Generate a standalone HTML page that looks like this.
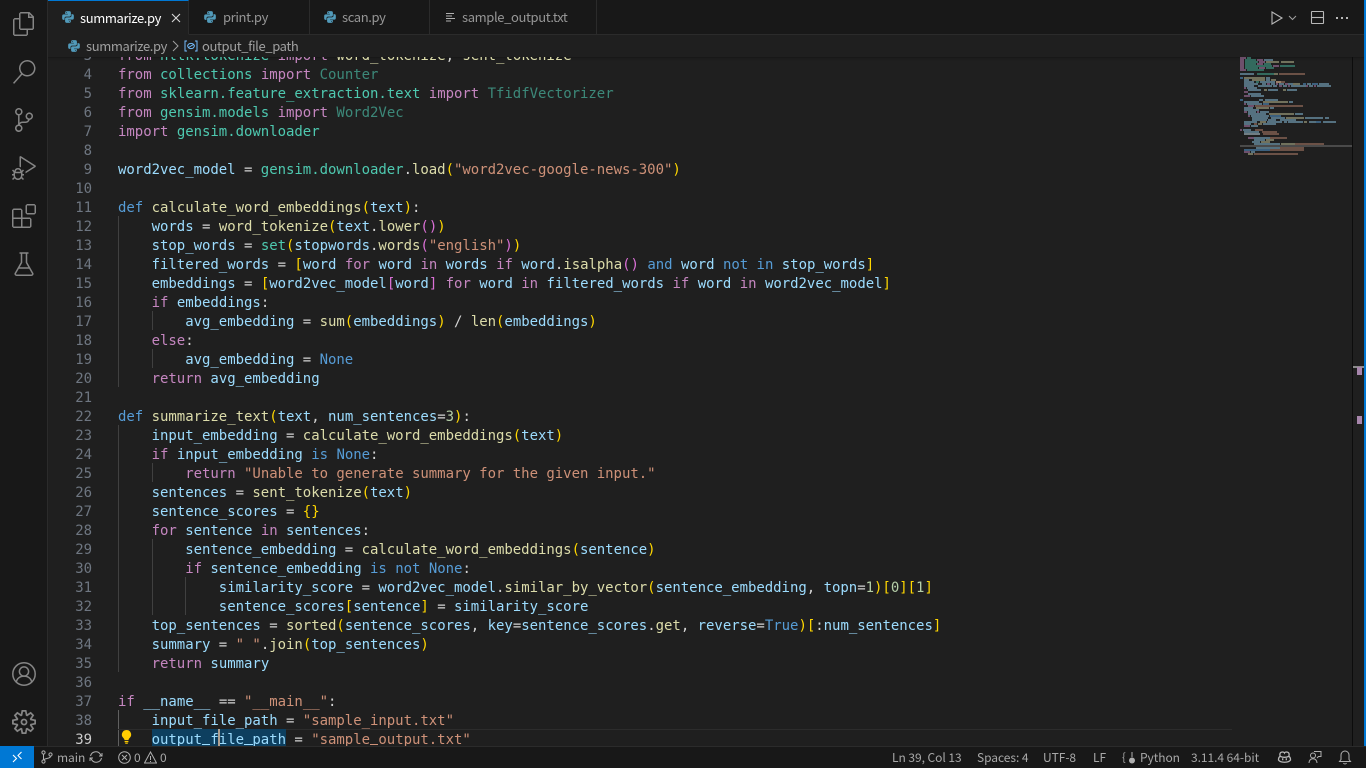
<!DOCTYPE html>
<html><head><meta charset="utf-8"><title>summarize.py</title>
<style>
html,body{margin:0;padding:0;width:1366px;height:768px;overflow:hidden;background:#1f1f1f}
*{box-sizing:border-box}
.abs,svg.i{position:absolute}
.ui{font-family:"Noto Sans CJK JP","Liberation Sans",sans-serif;font-size:13px;white-space:pre;letter-spacing:-.38px}
#act{position:absolute;left:0;top:0;width:48px;height:746px;background:#181818;border-right:1px solid #2b2b2b}
#tabs{position:absolute;left:48px;top:0;width:1318px;height:35px;background:#181818;border-bottom:1px solid #2b2b2b}
.tab{position:absolute;top:0;height:35px;background:#181818;border-right:1px solid #2b2b2b;border-bottom:1px solid #2b2b2b;color:#969696;line-height:34px}
.tab.on{background:#1f1f1f;border-top:1px solid #0078d4;border-bottom:1px solid #1f1f1f;color:#fff;line-height:33px}
.tab span{position:absolute;top:0}
#crumb{position:absolute;left:48px;top:35px;width:1318px;height:22px;background:#1f1f1f;color:#a0a0a0;line-height:22px}
#ed{position:absolute;left:48px;top:57px;width:1316px;height:689px;background:#1f1f1f;overflow:hidden;box-shadow:inset 0 3px 3px -3px #111}
.ln{position:absolute;left:0;width:44px;margin-top:1px;text-align:right;color:#6e7681;font:14px/19px "DejaVu Sans Mono",monospace;letter-spacing:-.03px}
.c{position:absolute;left:70px;margin-top:1px;white-space:pre;color:#d4d4d4;font:14px/19px "DejaVu Sans Mono",monospace;letter-spacing:-.03px}
.g{position:absolute;width:1px;background:#404040}
.k{color:#c586c0}.t{color:#4ec9b0}.v{color:#9cdcfe}.f{color:#dcdcaa}.s{color:#ce9178}.b{color:#569cd6}.n{color:#b5cea8}.y{color:#ffd700}.o{color:#da70d6}
.d{opacity:.62}
#st{position:absolute;left:0;top:746px;width:1366px;height:22px;background:#181818;border-top:1px solid #2b2b2b;color:#a8a8a8;line-height:21px;font-size:12px;letter-spacing:-.05px}
#st span{position:absolute;top:0}
</style></head><body>

<div id="act">
<svg class="i" style="left:12px;top:12px" width="24" height="24" viewBox="0 0 24 24" fill="#858585"><path fill-rule="evenodd" d="M17.5 0h-9L7 1.5V6H2.5L1 7.5v15.07L2.5 24h12.07L16 22.57V18h4.7l1.3-1.43V4.5L17.5 0zm0 2.12l2.38 2.38H17.5V2.12zm-3 20.38h-12v-15H7v9.07L8.5 18h6v4.5zm6-6h-12v-15H16V6h4.5v10.5z"/></svg>
<svg class="i" style="left:12px;top:60px" width="24" height="24" viewBox="0 0 24 24" fill="#858585"><path fill-rule="evenodd" d="M15.25 0a8.25 8.25 0 0 0-6.18 13.72L1 22.88l1.12 1 8.05-9.12A8.251 8.251 0 1 0 15.25.01V0zm0 15a6.75 6.75 0 1 1 0-13.5 6.75 6.75 0 0 1 0 13.5z"/></svg>
<svg class="i" style="left:12px;top:108px" width="24" height="24" viewBox="0 0 24 24" fill="#858585"><path fill-rule="evenodd" d="M21.007 8.222A3.738 3.738 0 0 0 15.045 5.2a3.737 3.737 0 0 0 1.156 6.583 2.988 2.988 0 0 1-2.668 1.67h-2.99a4.456 4.456 0 0 0-2.989 1.165V7.4a3.737 3.737 0 1 0-1.494 0v9.117a3.776 3.776 0 1 0 1.816.099 2.99 2.99 0 0 1 2.668-1.667h2.99a4.484 4.484 0 0 0 4.223-3.039 3.736 3.736 0 0 0 3.25-3.687zM4.565 3.738a2.242 2.242 0 1 1 4.484 0 2.242 2.242 0 0 1-4.484 0zm4.484 16.441a2.242 2.242 0 1 1-4.484 0 2.242 2.242 0 0 1 4.484 0zm8.221-9.715a2.242 2.242 0 1 1 0-4.485 2.242 2.242 0 0 1 0 4.485z"/></svg>
<svg class="i" style="left:12px;top:156px" width="24" height="24" viewBox="0 0 24 24" fill="#858585"><path fill-rule="evenodd" d="M10.94 13.5l-1.32 1.32a3.73 3.73 0 0 0-7.24 0L1.06 13.5 0 14.56l1.72 1.72-.22.22V18H0v1.5h1.5v.08c.077.489.214.966.41 1.42L0 22.94 1.06 24l1.65-1.65A4.308 4.308 0 0 0 6 24a4.31 4.31 0 0 0 3.29-1.65L10.94 24 12 22.94 10.09 21c.198-.464.336-.951.41-1.45v-.05H12V18h-1.5v-1.5l-.22-.22L12 14.56l-1.06-1.06zM6 13.5a2.25 2.25 0 0 1 2.25 2.25h-4.5A2.25 2.25 0 0 1 6 13.5zm3 6a3.33 3.33 0 0 1-3 3 3.33 3.33 0 0 1-3-3v-2.25h6v2.25zm14.76-9.9v1.26L13.5 17.37v-1.79l8.45-5.37L9 2v9.46a5.07 5.07 0 0 0-1.5-.72V.63L8.64 0l15.12 9.6z"/></svg>
<svg class="i" style="left:12px;top:204px" width="24" height="24" viewBox="0 0 24 24" fill="#858585"><path fill-rule="evenodd" d="M13.5 1.5L15 0h7.5L24 1.5V9l-1.5 1.5H15L13.5 9V1.5zm1.5 0V9h7.5V1.5H15zM0 15V6l1.5-1.5H9L10.5 6v7.5H18l1.5 1.5v7.5L18 24H1.5L0 22.5V15zm9-1.5V6H1.5v7.5H9zM9 15H1.5v7.5H9V15zm1.5 7.5H18V15h-7.5v7.5z"/></svg>
<svg class="i" style="left:12px;top:252px" width="24" height="24" viewBox="0 0 24 24" fill="none" stroke="#858585" stroke-width="1.5"><path d="M7.5 1h9M9.5 1v9.5L3.4 21.2a1.3 1.3 0 0 0 1.1 2h15a1.3 1.3 0 0 0 1.1-2L14.5 10.5V1M6.5 16h11"/></svg>
<svg class="i" style="left:12px;top:662px" width="24" height="24" viewBox="0 0 24 24" fill="none" stroke="#858585" stroke-width="1.5"><circle cx="12" cy="12" r="11.2"/><circle cx="12" cy="9.5" r="4.6"/><path d="M4.3 20.2c.5-3.6 3.6-6.1 7.7-6.1s7.2 2.5 7.7 6.1"/></svg>
<svg class="i" style="left:12px;top:710px" width="24" height="24" viewBox="0 0 24 24" fill="#858585"><path fill-rule="evenodd" d="M19.85 8.75l4.15.83v4.84l-4.15.83 2.35 3.52-3.43 3.43-3.52-2.35-.83 4.15H9.58l-.83-4.15-3.52 2.35-3.43-3.43 2.35-3.52L0 14.42V9.58l4.15-.83L1.8 5.23 5.23 1.8l3.52 2.35L9.58 0h4.84l.83 4.15 3.52-2.35 3.43 3.43-2.35 3.52zm-1.57 5.07l4-.81v-2l-4-.81-.54-1.3 2.29-3.43-1.43-1.43-3.43 2.29-1.3-.54-.81-4h-2l-.81 4-1.3.54-3.43-2.29-1.43 1.43L6.38 8.9l-.54 1.3-4 .81v2l4 .81.54 1.3-2.29 3.43 1.43 1.43 3.43-2.29 1.3.54.81 4h2l.81-4 1.3-.54 3.43 2.29 1.43-1.43-2.29-3.43.54-1.3zm-8.186-4.672A3.43 3.43 0 0 1 12 8.57 3.44 3.44 0 0 1 15.43 12a3.43 3.43 0 1 1-5.336-2.852zm.956 4.274c.281.188.612.288.95.288A1.7 1.7 0 0 0 13.71 12a1.71 1.71 0 1 0-2.66 1.422z"/></svg>
</div>

<svg width="0" height="0" style="position:absolute"><defs>
<symbol id="py" viewBox="0 0 24 24"><path fill="#519aba" d="M9.86 2A2.86 2.86 0 0 0 7 4.86v1.68h4.29c.39 0 .71.57.71.96H4.86A2.86 2.86 0 0 0 2 10.36v3.781a2.86 2.86 0 0 0 2.86 2.86h1.18v-2.68a2.85 2.85 0 0 1 2.85-2.86h5.25c1.58 0 2.86-1.271 2.86-2.851V4.86A2.86 2.86 0 0 0 14.14 2zm-.72 1.61c.4 0 .72.12.72.71s-.32.891-.72.891c-.39 0-.71-.3-.71-.89s.32-.711.71-.711z"/><path fill="#519aba" d="M17.959 7v2.68a2.85 2.85 0 0 1-2.85 2.859H9.86A2.85 2.85 0 0 0 7 15.389v3.75a2.86 2.86 0 0 0 2.86 2.86h4.28A2.86 2.86 0 0 0 17 19.14v-1.68h-4.291c-.39 0-.709-.57-.709-.96h7.14A2.86 2.86 0 0 0 22 13.64V9.86A2.86 2.86 0 0 0 19.14 7zm-3.1 11.789c.39 0 .71.3.71.89a.71.71 0 0 1-.71.71c-.4 0-.72-.12-.72-.71s.32-.89.72-.89z"/></symbol>
</defs></svg>

<div id="tabs" class="ui">
<div class="tab on" style="left:0;width:141px"><svg class="i" style="left:13px;top:9px" width="14" height="14"><use href="#py"/></svg><span style="left:32px">summarize.py</span>
<svg class="i" style="left:123px;top:12px" width="10" height="10" viewBox="0 0 10 10" stroke="#d8d8d8" stroke-width="1.1"><path d="M1 1l8 8M9 1l-8 8"/></svg></div>
<div class="tab" style="left:141px;width:121px"><svg class="i" style="left:14px;top:10px" width="14" height="14"><use href="#py"/></svg><span style="left:34px">print.py</span></div>
<div class="tab" style="left:262px;width:120px"><svg class="i" style="left:13px;top:10px" width="14" height="14"><use href="#py"/></svg><span style="left:32px">scan.py</span></div>
<div class="tab" style="left:382px;width:167px"><svg class="i" style="left:16px;top:12px" width="10" height="10" viewBox="0 0 10 10" stroke="#b0b0b0" stroke-width="1"><path d="M0 1.5h8M0 4h6M0 6.5h9M0 9h5"/></svg><span style="left:32px">sample_output.txt</span></div>
<svg class="i" style="left:1222px;top:10px" width="14" height="16" viewBox="0 0 14 16" fill="none" stroke="#b8b8b8" stroke-width="1.1"><path d="M2 2v12l10-6z"/></svg>
<svg class="i" style="left:1240px;top:15px" width="9" height="6" viewBox="0 0 9 6" fill="none" stroke="#a0a0a0" stroke-width="1"><path d="M1 1l3.5 3.5L8 1"/></svg>
<svg class="i" style="left:1262px;top:10px" width="15" height="15" viewBox="0 0 15 15" fill="none" stroke="#b8b8b8" stroke-width="1.1"><rect x="1.5" y="1.5" width="12" height="12" rx=".5"/><path d="M1.5 7.5h12"/></svg>
<svg class="i" style="left:1287px;top:16px" width="14" height="4" viewBox="0 0 14 4" fill="#b8b8b8"><rect x="1" y="1" width="2" height="2"/><rect x="6" y="1" width="2" height="2"/><rect x="11" y="1" width="2" height="2"/></svg>
</div>

<div id="crumb" class="ui">
<svg class="i" style="left:19px;top:4px" width="14" height="14"><use href="#py"/></svg>
<span class="abs" style="left:38px;top:0">summarize.py</span>
<svg class="i" style="left:124px;top:5px" width="7" height="12" viewBox="0 0 7 12" fill="none" stroke="#a0a0a0" stroke-width="1"><path d="M1 1l5 5-5 5"/></svg>
<svg class="i" style="left:136px;top:5px" width="14" height="12" viewBox="0 0 14 12" fill="none" stroke="#75beff" stroke-width="1"><path d="M3 1H1v10h2M11 1h2v10h-2"/><ellipse cx="7" cy="6" rx="3.3" ry="2.6"/><path d="M4.5 7.5l5-3"/></svg>
<span class="abs" style="left:154px;top:0">output_file_path</span>
</div>

<div id="ed">
<!-- indent guides -->
<div class="g" style="left:70px;top:159px;height:171px"></div>
<div class="g" style="left:70px;top:368px;height:247px"></div>
<div class="g" style="left:70px;top:653px;height:36px;background:#606060"></div>
<div class="g" style="left:104px;top:254px;height:19px"></div>
<div class="g" style="left:104px;top:292px;height:19px"></div>
<div class="g" style="left:104px;top:406px;height:19px"></div>
<div class="g" style="left:104px;top:482px;height:76px"></div>
<div class="g" style="left:137px;top:520px;height:38px"></div>
<!-- current line -->
<div class="abs" style="left:70px;top:672px;width:1114px;height:1px;background:#2c2c2c"></div>
<div class="abs" style="left:104px;top:672px;width:134px;height:17px;background:#0d3f5f"></div>

<div class="c" style="top:-11px"><span class="k">from</span> <span class="t">nltk.tokenize</span> <span class="k">import</span> <span class="f">word_tokenize</span>, <span class="f">sent_tokenize</span></div>
<div class="ln" style="top:-11px">3</div>
<div class="ln" style="top:8px">4</div><div class="c" style="top:8px"><span class="k">from</span> <span class="t">collections</span> <span class="k">import</span> <span class="t d">Counter</span></div>
<div class="ln" style="top:27px">5</div><div class="c" style="top:27px"><span class="k">from</span> <span class="t">sklearn.feature_extraction.text</span> <span class="k">import</span> <span class="t d">TfidfVectorizer</span></div>
<div class="ln" style="top:46px">6</div><div class="c" style="top:46px"><span class="k">from</span> <span class="t">gensim.models</span> <span class="k">import</span> <span class="t d">Word2Vec</span></div>
<div class="ln" style="top:65px">7</div><div class="c" style="top:65px"><span class="k">import</span> <span class="t">gensim.downloader</span></div>
<div class="ln" style="top:84px">8</div>
<div class="ln" style="top:103px">9</div><div class="c" style="top:103px"><span class="v">word2vec_model</span> = <span class="t">gensim.downloader</span>.<span class="f">load</span><span class="y">(</span><span class="s">"word2vec-google-news-300"</span><span class="y">)</span></div>
<div class="ln" style="top:122px">10</div>
<div class="ln" style="top:141px">11</div><div class="c" style="top:141px"><span class="b">def</span> <span class="f">calculate_word_embeddings</span><span class="y">(</span><span class="v">text</span><span class="y">)</span>:</div>
<div class="ln" style="top:160px">12</div><div class="c" style="top:160px">    <span class="v">words</span> = <span class="f">word_tokenize</span><span class="y">(</span><span class="v">text</span>.<span class="f">lower</span><span class="o">()</span><span class="y">)</span></div>
<div class="ln" style="top:179px">13</div><div class="c" style="top:179px">    <span class="v">stop_words</span> = <span class="t">set</span><span class="y">(</span><span class="v">stopwords</span>.<span class="f">words</span><span class="o">(</span><span class="s">"english"</span><span class="o">)</span><span class="y">)</span></div>
<div class="ln" style="top:198px">14</div><div class="c" style="top:198px">    <span class="v">filtered_words</span> = <span class="y">[</span><span class="v">word</span> <span class="k">for</span> <span class="v">word</span> <span class="k">in</span> <span class="v">words</span> <span class="k">if</span> <span class="v">word</span>.<span class="f">isalpha</span><span class="o">()</span> <span class="b">and</span> <span class="v">word</span> <span class="b">not in</span> <span class="v">stop_words</span><span class="y">]</span></div>
<div class="ln" style="top:217px">15</div><div class="c" style="top:217px">    <span class="v">embeddings</span> = <span class="y">[</span><span class="v">word2vec_model</span><span class="o">[</span><span class="v">word</span><span class="o">]</span> <span class="k">for</span> <span class="v">word</span> <span class="k">in</span> <span class="v">filtered_words</span> <span class="k">if</span> <span class="v">word</span> <span class="k">in</span> <span class="v">word2vec_model</span><span class="y">]</span></div>
<div class="ln" style="top:236px">16</div><div class="c" style="top:236px">    <span class="k">if</span> <span class="v">embeddings</span>:</div>
<div class="ln" style="top:255px">17</div><div class="c" style="top:255px">        <span class="v">avg_embedding</span> = <span class="f">sum</span><span class="y">(</span><span class="v">embeddings</span><span class="y">)</span> / <span class="f">len</span><span class="y">(</span><span class="v">embeddings</span><span class="y">)</span></div>
<div class="ln" style="top:274px">18</div><div class="c" style="top:274px">    <span class="k">else</span>:</div>
<div class="ln" style="top:293px">19</div><div class="c" style="top:293px">        <span class="v">avg_embedding</span> = <span class="b">None</span></div>
<div class="ln" style="top:312px">20</div><div class="c" style="top:312px">    <span class="k">return</span> <span class="v">avg_embedding</span></div>
<div class="ln" style="top:331px">21</div>
<div class="ln" style="top:350px">22</div><div class="c" style="top:350px"><span class="b">def</span> <span class="f">summarize_text</span><span class="y">(</span><span class="v">text</span>, <span class="v">num_sentences</span>=<span class="n">3</span><span class="y">)</span>:</div>
<div class="ln" style="top:369px">23</div><div class="c" style="top:369px">    <span class="v">input_embedding</span> = <span class="f">calculate_word_embeddings</span><span class="y">(</span><span class="v">text</span><span class="y">)</span></div>
<div class="ln" style="top:388px">24</div><div class="c" style="top:388px">    <span class="k">if</span> <span class="v">input_embedding</span> <span class="b">is</span> <span class="b">None</span>:</div>
<div class="ln" style="top:407px">25</div><div class="c" style="top:407px">        <span class="k">return</span> <span class="s">"Unable to generate summary for the given input."</span></div>
<div class="ln" style="top:426px">26</div><div class="c" style="top:426px">    <span class="v">sentences</span> = <span class="f">sent_tokenize</span><span class="y">(</span><span class="v">text</span><span class="y">)</span></div>
<div class="ln" style="top:445px">27</div><div class="c" style="top:445px">    <span class="v">sentence_scores</span> = <span class="y">{}</span></div>
<div class="ln" style="top:464px">28</div><div class="c" style="top:464px">    <span class="k">for</span> <span class="v">sentence</span> <span class="k">in</span> <span class="v">sentences</span>:</div>
<div class="ln" style="top:483px">29</div><div class="c" style="top:483px">        <span class="v">sentence_embedding</span> = <span class="f">calculate_word_embeddings</span><span class="y">(</span><span class="v">sentence</span><span class="y">)</span></div>
<div class="ln" style="top:502px">30</div><div class="c" style="top:502px">        <span class="k">if</span> <span class="v">sentence_embedding</span> <span class="b">is not</span> <span class="b">None</span>:</div>
<div class="ln" style="top:521px">31</div><div class="c" style="top:521px">            <span class="v">similarity_score</span> = <span class="v">word2vec_model</span>.<span class="f">similar_by_vector</span><span class="y">(</span><span class="v">sentence_embedding</span>, <span class="v">topn</span>=<span class="n">1</span><span class="y">)[</span><span class="n">0</span><span class="y">][</span><span class="n">1</span><span class="y">]</span></div>
<div class="ln" style="top:540px">32</div><div class="c" style="top:540px">            <span class="v">sentence_scores</span><span class="y">[</span><span class="v">sentence</span><span class="y">]</span> = <span class="v">similarity_score</span></div>
<div class="ln" style="top:559px">33</div><div class="c" style="top:559px">    <span class="v">top_sentences</span> = <span class="f">sorted</span><span class="y">(</span><span class="v">sentence_scores</span>, <span class="v">key</span>=<span class="v">sentence_scores</span>.<span class="f">get</span>, <span class="v">reverse</span>=<span class="b">True</span><span class="y">)[</span>:<span class="v">num_sentences</span><span class="y">]</span></div>
<div class="ln" style="top:578px">34</div><div class="c" style="top:578px">    <span class="v">summary</span> = <span class="s">" "</span>.<span class="f">join</span><span class="y">(</span><span class="v">top_sentences</span><span class="y">)</span></div>
<div class="ln" style="top:597px">35</div><div class="c" style="top:597px">    <span class="k">return</span> <span class="v">summary</span></div>
<div class="ln" style="top:616px">36</div>
<div class="ln" style="top:635px">37</div><div class="c" style="top:635px"><span class="k">if</span> <span class="v">__name__</span> == <span class="s">"__main__"</span>:</div>
<div class="ln" style="top:654px">38</div><div class="c" style="top:654px">    <span class="v">input_file_path</span> = <span class="s">"sample_input.txt"</span></div>
<div class="ln" style="top:673px;color:#cccccc">39</div><div class="c" style="top:673px">    <span class="v">output_file_path</span> = <span class="s">"sample_output.txt"</span></div>

<!-- underscores that would otherwise clip against the status bar -->
<div class="abs" style="left:154px;top:687px;width:8px;height:1px;background:#9cdcfe"></div>
<div class="abs" style="left:196px;top:687px;width:9px;height:1px;background:#9cdcfe"></div>
<div class="abs" style="left:322px;top:687px;width:8px;height:1px;background:#ce9178"></div>

<div class="abs" style="left:170px;top:672px;width:2px;height:17px;background:#b0a090"></div>
<svg class="i" style="left:72px;top:672px" width="13" height="16" viewBox="0 0 13 16" fill="#ffcc00"><path d="M6.5 1a4.6 4.6 0 0 0-3 8.1c.6.6.9 1.1 1 2h4c.1-.9.4-1.4 1-2A4.6 4.6 0 0 0 6.500 1zM4.600 12h3.800v1.200H4.600zM5.200 13.800h2.600v1H5.200z"/></svg>

<!-- minimap -->
<svg class="i" style="left:1192px;top:0" width="112" height="110" viewBox="0 0 112 110" fill="none" stroke-width="1.8">
<g stroke="#c586c0" opacity=".55"><path d="M0 1h6M0 3h4M17 3h6M0 5h4M19 5h6M0 7h4M17 7h6M0 9h4M33 9h6M0 11h4M19 11h6M0 13h6M27 27h3M36 27h2M45 27h3M39 29h3M48 29h2M66 29h2M74 29h2M4 31h2M4 35h4M4 39h6M4 47h2M8 49h6M4 55h3M17 55h2M8 59h2M4 69h6M0 73h2M8 81h6M4 95h6"/></g>
<g stroke="#4ec9b0" opacity=".5"><path d="M7 1h4M5 3h11M5 5h13M5 7h11M24 7h7M5 9h27M40 9h15M5 11h13M26 11h8M7 13h17M17 17h17M16 25h3"/></g>
<g stroke="#9cdcfe" opacity=".5"><path d="M24 3h9M0 17h14M26 21h4M4 23h5M26 23h4M4 25h10M20 25h15M4 27h14M22 27h4M31 27h4M39 27h5M48 27h5M67 27h4M79 27h10M4 29h10M18 29h14M33 29h4M43 29h4M51 29h15M69 29h4M77 29h14M7 31h10M8 33h13M28 33h10M47 33h10M8 37h13M11 39h13M19 43h4M25 43h13M4 45h15M49 45h4M7 47h15M4 51h9M30 51h4M4 53h15M8 55h8M20 55h9M8 57h18M55 57h8M11 59h18M12 61h16M31 61h14M65 61h18M85 61h4M12 63h15M28 63h8M40 63h16M4 65h13M27 65h15M44 65h3M48 65h15M69 65h7M83 65h13M4 67h7M23 67h13M11 69h7M3 73h8M4 75h15M4 77h16M14 81h16M14 83h11M12 85h8M14 87h26M16 91h24M11 95h4"/></g>
<g stroke="#dcdcaa" opacity=".5"><path d="M26 5h13M41 5h13M34 17h4M4 21h21M12 23h13M31 23h5M36 25h5M53 27h7M24 33h3M43 33h3M23 45h25M16 51h13M29 57h25M46 61h18M20 65h6M64 65h3M18 67h4M26 83h8M21 85h9M41 87h14M8 97h5"/></g>
<g stroke="#ce9178" opacity=".5"><path d="M39 17h26M36 25h9M15 49h48M14 67h3M15 73h8M22 75h15M23 77h16M30 81h17M55 87h29M40 91h24M30 93h34M14 97h44"/></g>
<g stroke="#569cd6" opacity=".6"><path d="M0 21h3M0 43h3M63 27h3M72 27h6M23 47h6M30 59h11M76 65h5M4 93h26"/></g>
<path d="M4 77h16" stroke="#8a8a8a" opacity=".6"/>
</svg>
<div class="abs" style="left:1192px;top:88px;width:112px;height:2px;background:#4a4a4a"></div>

<!-- overview ruler -->
<div class="abs" style="left:1304px;top:0;width:1px;height:689px;background:#0c0c0c"></div>
<div class="abs" style="left:1305px;top:309px;width:11px;height:2px;background:#8a8a8a"></div>
<div class="abs" style="left:1309px;top:310px;width:5px;height:8px;background:#a685ab"></div>
<div class="abs" style="left:1309px;top:359px;width:5px;height:8px;background:#a685ab"></div>
</div>

<div class="abs" style="left:1364px;top:0;width:2px;height:746px;background:#0078d4"></div>

<div id="st" class="ui">
<div class="abs" style="left:0;top:-1px;width:34px;height:22px;background:#0078d4"></div>
<svg class="i" style="left:11px;top:3px" width="13" height="14" viewBox="0 0 13 14" fill="none" stroke="#fff" stroke-width="1.1"><path d="M2 5l3.500 3.500L2 12M10.500 2L7 5.500 10.500 9"/></svg>
<svg class="i" style="left:41px;top:3px" width="12" height="14" viewBox="0 0 12 14" fill="none" stroke="#b0b0b0" stroke-width="1"><circle cx="2.500" cy="2.500" r="1.600"/><circle cx="2.500" cy="11.500" r="1.600"/><circle cx="9.500" cy="4.500" r="1.600"/><path d="M2.500 4v6M9.500 6.200c0 2.600-5 1.600-7 3.800"/></svg>
<span style="left:57px">main</span>
<svg class="i" style="left:89px;top:3px" width="14" height="14" viewBox="0 0 14 14" fill="none" stroke="#b0b0b0" stroke-width="1"><path d="M1.500 6a5.400 5.400 0 0 1 9.800-1.800L12.500 6M12.500 8a5.400 5.400 0 0 1-9.800 1.800L1.500 8M13 3v3h-3M1 11V8h3"/></svg>
<svg class="i" style="left:118px;top:4px" width="13" height="13" viewBox="0 0 13 13" fill="none" stroke="#b0b0b0" stroke-width="1"><circle cx="6.500" cy="6.500" r="5.800"/><path d="M4 4l5 5M9 4l-5 5"/></svg>
<span style="left:134px">0</span>
<svg class="i" style="left:144px;top:4px" width="13" height="13" viewBox="0 0 13 13" fill="none" stroke="#b0b0b0" stroke-width="1"><path d="M6.500 1L12.500 12H.5zM6.500 5v4M6.500 10v1"/></svg>
<span style="left:160px">0</span>
<span style="left:892px">Ln 39, Col 13</span>
<span style="left:977px">Spaces: 4</span>
<span style="left:1043px">UTF-8</span>
<span style="left:1093px">LF</span>
<span style="left:1122px;letter-spacing:3px;font-size:11px">{</span>
<svg class="i" style="left:1128px;top:4px" width="8" height="13" viewBox="0 0 8 13" fill="#b0b0b0"><circle cx="4" cy="9.500" r="3"/><path d="M3.500 1h1v5h-1z"/></svg>
<span style="left:1140px">Python</span>
<span style="left:1191px">3.11.4 64-bit</span>
<svg class="i" style="left:1277px;top:4px" width="15" height="13" viewBox="0 0 15 13" fill="none" stroke="#b8b8b8" stroke-width="1.300"><path d="M3.200 5.200C2.200 2.500 3.500 1 5.500 1c1 0 1.700.4 2 1 .3-.6 1-1 2-1 2 0 3.300 1.500 2.300 4.200 1.400 1 1.800 2.300 1.700 3.800-2 3-10 3-12 0-.1-1.500.3-2.800 1.700-3.800zM3.500 5.500c2.500 1 5.500 1 8 0"/><path d="M5.700 7.300v2M9.300 7.300v2"/></svg>
<svg class="i" style="left:1308px;top:3px" width="14" height="14" viewBox="0 0 14 14" fill="none" stroke="#b0b0b0" stroke-width="1"><circle cx="5" cy="5.500" r="2.500"/><path d="M1 13c.2-2.800 1.800-4.300 4-4.300s3.800 1.500 4 4.300M6 1.500h7v5H10.500L9 8"/></svg>
<svg class="i" style="left:1338px;top:3px" width="14" height="15" viewBox="0 0 14 15" fill="none" stroke="#b0b0b0" stroke-width="1"><path d="M7 1a4 4 0 0 0-4 4v4.500L1.500 11.500h11L11 9.500V5a4 4 0 0 0-4-4zM5.500 13a1.600 1.600 0 0 0 3 0"/></svg>
</div>
</body></html>
